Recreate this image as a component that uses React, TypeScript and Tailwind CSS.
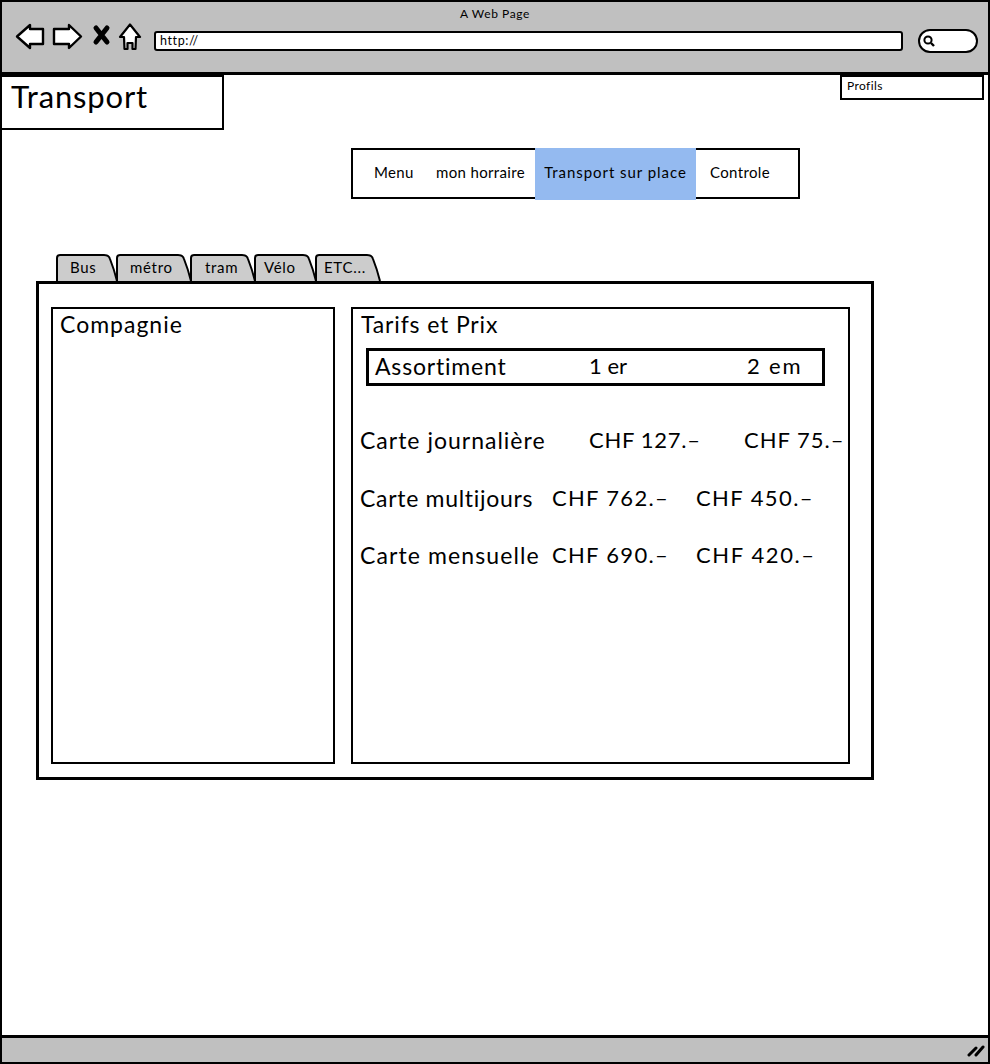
import React from "react";

function Tab({ w, widthClass, label, pos, z }: { w: number; widthClass: string; label: string; pos: string; z: string }) {
  const d = `M1 27 L1 4 Q1 1 4 1 L${w - 14} 1 Q${w - 9} 1 ${w - 8} 5 Q${w - 4} 15 ${w - 1} 27`;
  return (
    <div className={`relative h-[28px] ${z} ${widthClass}`}>
      <svg className="absolute inset-0" width={w} height={28} viewBox={`0 0 ${w} 28`}>
        <path d={d} fill="#cccccc" stroke="#000" strokeWidth="2" />
      </svg>
      <span className={`absolute top-[3px] text-[15px] leading-[20px] tracking-[0.7px] ${pos}`}>{label}</span>
    </div>
  );
}

export default function App() {
  return (
    <div className="w-[990px] h-[1064px] bg-white border-2 border-black flex flex-col font-['Lato','Noto_Sans',sans-serif] text-black overflow-hidden">
      {/* browser chrome */}
      <div className="h-[73px] shrink-0 bg-[#c0c0c0] border-b-[3px] border-black">
        <div className="text-center text-[12px] leading-[16px] pt-[4px] tracking-[0.6px]">A Web Page</div>
        <div className="flex items-center pl-[13px] h-[38px]">
          <svg width="132" height="36" viewBox="0 0 132 36" className="shrink-0">
            <path d="M2 13.5 L15 2 L15 6 L28 6 L28 21 L15 21 L15 25 Z" fill="#fff" stroke="#000" strokeWidth="2.4" strokeLinejoin="round" />
            <path d="M39 6 L54 6 L54 2 L66 13.5 L54 25 L54 21 L39 21 Z" fill="#fff" stroke="#000" strokeWidth="2.4" strokeLinejoin="round" />
            <path d="M81 5 L92 19 M92 5 L81 19" fill="none" stroke="#000" strokeWidth="5" strokeLinecap="round" />
            <path d="M115 1.5 L125 14 L121 14 L120.5 26 L117.5 26 L117.5 20 L112.5 20 L112.5 26 L109.5 26 L109 14 L105 14 Z" fill="#fff" stroke="#000" strokeWidth="2.2" strokeLinejoin="round" />
          </svg>
          <div className="ml-[7px] w-[749px] h-[20px] bg-white border-2 border-black rounded-[3px] text-[12.5px] leading-[15px] pl-[4px] tracking-[0.6px]">http://</div>
          <div className="ml-[15px] w-[60px] h-[24px] bg-white border-2 border-black rounded-[12px] flex items-center pl-[2px]">
            <svg width="14" height="14" viewBox="0 0 14 14">
              <circle cx="6" cy="6" r="3.6" fill="none" stroke="#000" strokeWidth="2" />
              <path d="M9 9 L12 12" stroke="#000" strokeWidth="2.4" />
            </svg>
          </div>
        </div>
      </div>

      {/* page */}
      <div className="flex-1 flex flex-col">
        <div className="flex justify-between items-start">
          <div className="-ml-[2px] w-[224px] h-[55px] bg-white border-2 border-black text-[31px] leading-[36px] pl-[9px] pt-[1px] tracking-[0.85px]">Transport</div>
          <div className="mr-[4px] w-[144px] h-[25px] bg-white border-2 border-black text-[12px] leading-[16px] pl-[5px] pt-[1px] tracking-[0.4px]">Profils</div>
        </div>

        <div className="ml-[349px] mt-[18px] w-[449px] h-[51px] border-2 border-black flex items-stretch text-[15px] tracking-[0.35px]">
          <div className="w-[83px] flex items-center pl-[21px] pb-[3px]">Menu</div>
          <div className="w-[99px] flex items-center pb-[3px]">mon horraire</div>
          <div className="w-[161px] -mt-[2px] -mb-[3px] bg-[#94baf0] flex items-center justify-center pb-[3px] tracking-[0.95px]">Transport sur place</div>
          <div className="flex items-center pl-[14px] pb-[3px]">Controle</div>
        </div>

        <div className="ml-[54px] mt-[55px] flex">
          <Tab w={62} widthClass="w-[60px]" label="Bus" pos="left-[14px]" z="z-[5]" />
          <Tab w={76} widthClass="w-[74px]" label="métro" pos="left-[14px]" z="z-[4]" />
          <Tab w={66} widthClass="w-[64px]" label="tram" pos="left-[15px]" z="z-[3]" />
          <Tab w={63} widthClass="w-[61px]" label="Vélo" pos="left-[10px]" z="z-[2]" />
          <Tab w={66} widthClass="w-[66px]" label="ETC..." pos="left-[9px]" z="z-[1]" />
        </div>

        <div className="ml-[34px] -mt-[1px] w-[838px] h-[499px] border-[3px] border-black bg-white flex relative z-10 pl-[12px] pt-[23px] gap-[16px]">
          <div className="w-[284px] h-[457px] border-2 border-black text-[23px] leading-[28px] pl-[7px] pt-[1px] tracking-[1px]">Compagnie</div>
          <div className="w-[499px] h-[457px] border-2 border-black pt-[1px] text-[23px] leading-[28px]">
            <div className="pl-[8px] tracking-[0.85px]">Tarifs et Prix</div>
            <div className="ml-[13px] mt-[10px] w-[459px] h-[38px] border-[3px] border-black flex items-center pl-[6px] pb-[3px]">
              <span className="w-[214px] tracking-[0.8px]">Assortiment</span>
              <span className="w-[158px] text-[22px]">1 er</span>
              <span className="text-[22px] tracking-[1.8px]">2 em</span>
            </div>
            <div className="mt-[40px] pl-[7px] flex flex-col gap-[29.5px]">
              <div className="flex">
                <span className="w-[229px] tracking-[1px]">Carte journalière</span>
                <span className="w-[155px] text-[22px] tracking-[0.7px]">CHF 127.–</span>
                <span className="text-[22px] tracking-[1px]">CHF 75.–</span>
              </div>
              <div className="flex">
                <span className="w-[192px] tracking-[0.7px]">Carte multijours</span>
                <span className="w-[144px] text-[22px] tracking-[1.3px]">CHF 762.–</span>
                <span className="text-[22px] tracking-[1.4px]">CHF 450.–</span>
              </div>
              <div className="flex">
                <span className="w-[192px] tracking-[1.1px]">Carte mensuelle</span>
                <span className="w-[144px] text-[22px] tracking-[1.3px]">CHF 690.–</span>
                <span className="text-[22px] tracking-[1.6px]">CHF 420.–</span>
              </div>
            </div>
          </div>
        </div>

        <div className="mt-auto h-[27px] shrink-0 bg-[#c0c0c0] border-t-[3px] border-black flex items-center justify-end pr-[3px]">
          <svg width="18" height="14" viewBox="0 0 18 14">
            <path d="M2 12 L9 5 M9 12 L16 4" stroke="#000" strokeWidth="3" strokeLinecap="round" />
          </svg>
        </div>
      </div>
    </div>
  );
}
